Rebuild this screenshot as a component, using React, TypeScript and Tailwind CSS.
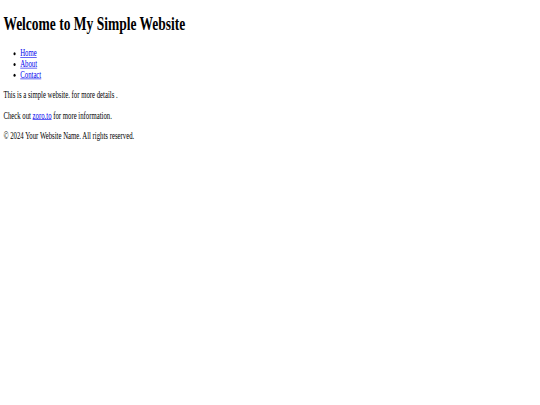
import React from 'react';

export default function App() {
  return (
    <div className="w-[540px] h-[405px] overflow-hidden bg-white">
      {/* page is laid out at 1280 wide and squeezed to the window, as in the reference */}
      <div className="flow-root w-[1280px] h-[675px] origin-top-left scale-x-[0.421875] scale-y-[0.6] px-2 text-black text-[16px] leading-[normal] font-['Liberation_Serif',serif]">
        <header>
          <h1 className="text-[32px] font-bold my-[21.44px]">Welcome to My Simple Website</h1>
          <nav>
            <ul className="list-disc pl-10 my-4">
              <li>
                <a href="#" className="text-[#0000ee] underline">Home</a>
              </li>
              <li>
                <a href="#" className="text-[#0000ee] underline">About</a>
              </li>
              <li>
                <a href="#" className="text-[#0000ee] underline">Contact</a>
              </li>
            </ul>
          </nav>
        </header>
        <main>
          <p className="my-4">This is a simple website. for more details .</p>
          <p className="my-4">
            Check out{' '}
            <a href="#" className="text-[#0000ee] underline">zoro.to</a>{' '}
            for more information.
          </p>
        </main>
        <footer>
          <p className="my-4">© 2024 Your Website Name. All rights reserved.</p>
        </footer>
      </div>
    </div>
  );
}
